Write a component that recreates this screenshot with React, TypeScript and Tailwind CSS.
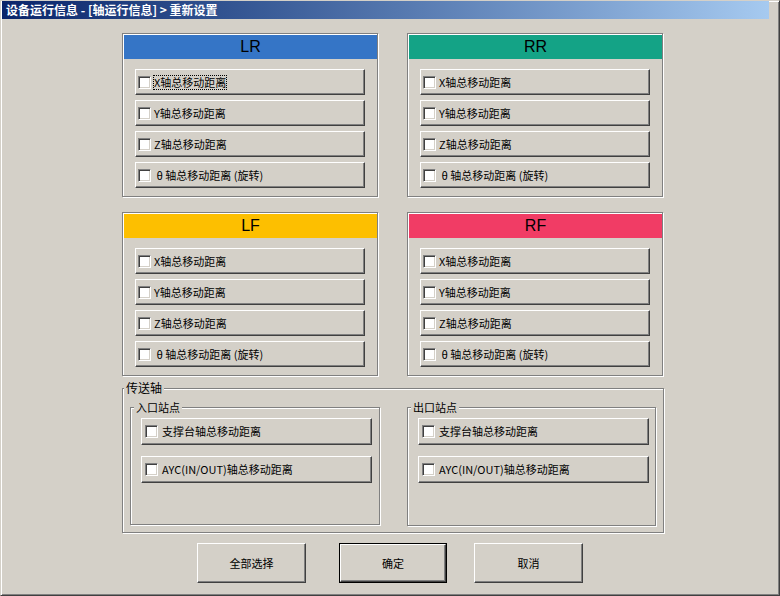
import React from "react";

const btn3d =
  "bg-[#d4d0c8] border border-t-white border-l-white border-b-[#404040] border-r-[#404040] shadow-[inset_-1px_-1px_0_#808080]";
const etched = "border border-[#808080] shadow-[inset_1px_1px_0_#fff,1px_1px_0_#fff]";

function Check() {
  return (
    <span className="inline-block shrink-0 w-[13px] h-[13px] bg-white border border-t-[#808080] border-l-[#808080] border-b-white border-r-white shadow-[inset_1px_1px_0_#404040,inset_-1px_-1px_0_#d4d0c8]" />
  );
}

function CheckButton({
  label,
  focus,
  h = "h-[26px]",
  w = "w-[230px]",
  checkMl = "ml-[2px]",
  textMl = "ml-[3px]",
}: {
  label: string;
  focus?: boolean;
  h?: string;
  w?: string;
  checkMl?: string;
  textMl?: string;
}) {
  return (
    <div className={`flex items-center ${h} ${w} ${btn3d}`}>
      <span className={`flex ${checkMl}`}>
        <Check />
      </span>
      <span
        className={`${textMl} text-[11px] leading-[13px] text-black whitespace-pre ${
          focus ? "outline outline-1 outline-dotted outline-black outline-offset-0" : ""
        }`}
      >
        {label}
      </span>
    </div>
  );
}

function Panel({ title, color, first }: { title: string; color: string; first?: boolean }) {
  const items = ["X轴总移动距离", "Y轴总移动距离", "Z轴总移动距离", " θ 轴总移动距离 (旋转)"];
  return (
    <div className={`w-[256px] h-[164px] ${etched} flex flex-col`}>
      <div
        className={`ml-[1px] mt-[1px] h-[24px] flex items-center justify-center ${color} text-[16px] text-black font-['Liberation_Sans',sans-serif]`}
      >
        {title}
      </div>
      <div className="ml-[12px] mt-[10px] flex flex-col gap-[5px]">
        {items.map((t, i) => (
          <CheckButton key={t} label={t} focus={first && i === 0} />
        ))}
      </div>
    </div>
  );
}

function SubGroup({ title, w, h }: { title: string; w: string; h: string }) {
  return (
    <div className={`relative ${w} ${h} ${etched}`}>
      <span className="absolute -top-[8px] left-[3px] px-[2px] bg-[#d4d0c8] text-[11px] leading-[14px] text-black">
        {title}
      </span>
      <div className="ml-[10px] mt-[10px] flex flex-col gap-[11px]">
        <CheckButton label="支撑台轴总移动距离" h="h-[27px]" w="w-[231px]" checkMl="ml-[3px]" textMl="ml-[4px]" />
        <CheckButton label="AYC(IN/OUT)轴总移动距离" h="h-[27px]" w="w-[231px]" checkMl="ml-[3px]" textMl="ml-[4px]" />
      </div>
    </div>
  );
}

export default function App() {
  return (
    <div className="w-[780px] h-[596px] bg-[#d4d0c8] border border-t-[#d4d0c8] border-l-[#d4d0c8] border-b-[#404040] border-r-[#404040] shadow-[inset_1px_1px_0_#fff,inset_-1px_-1px_0_#808080] flex flex-col font-['Noto_Sans_CJK_SC',sans-serif] overflow-hidden">
      <div className="ml-[1px] mr-[10px] h-[18px] bg-linear-to-r from-[#0a246a] to-[#a6caf0] flex items-center pl-[4px]">
        <span className="text-white font-bold text-[12px] leading-[14px] whitespace-pre">
          设备运行信息 - [轴运行信息] &gt; 重新设置
        </span>
      </div>

      <div className="ml-[121px] mt-[14px] grid grid-cols-[256px_256px] gap-x-[29px] gap-y-[15px] w-[541px]">
        <Panel title="LR" color="bg-[#3575c6]" first />
        <Panel title="RR" color="bg-[#14a386]" />
        <Panel title="LF" color="bg-[#fdbf00]" />
        <Panel title="RF" color="bg-[#f13c65]" />
      </div>

      <div className={`relative ml-[121px] mt-[12px] w-[542px] h-[145px] ${etched}`}>
        <span className="absolute -top-[8px] left-[1px] px-[2px] bg-[#d4d0c8] text-[12px] leading-[14px] text-black">
          传送轴
        </span>
        <div className="flex ml-[7px] mt-[18px]">
          <SubGroup title="入口站点" w="w-[250px]" h="h-[118px]" />
          <div className="ml-[27px]">
            <SubGroup title="出口站点" w="w-[249px]" h="h-[119px]" />
          </div>
        </div>
      </div>

      <div className="flex ml-[196px] mt-[10px]">
        <div className={`w-[109px] h-[40px] flex items-center justify-center text-[11px] text-black ${btn3d}`}>
          全部选择
        </div>
        <div className="ml-[33px] w-[108px] h-[40px] border border-black">
          <div className={`w-full h-full flex items-center justify-center text-[11px] text-black ${btn3d}`}>
            确定
          </div>
        </div>
        <div className={`ml-[27px] w-[109px] h-[40px] flex items-center justify-center text-[11px] text-black ${btn3d}`}>
          取消
        </div>
      </div>
    </div>
  );
}
